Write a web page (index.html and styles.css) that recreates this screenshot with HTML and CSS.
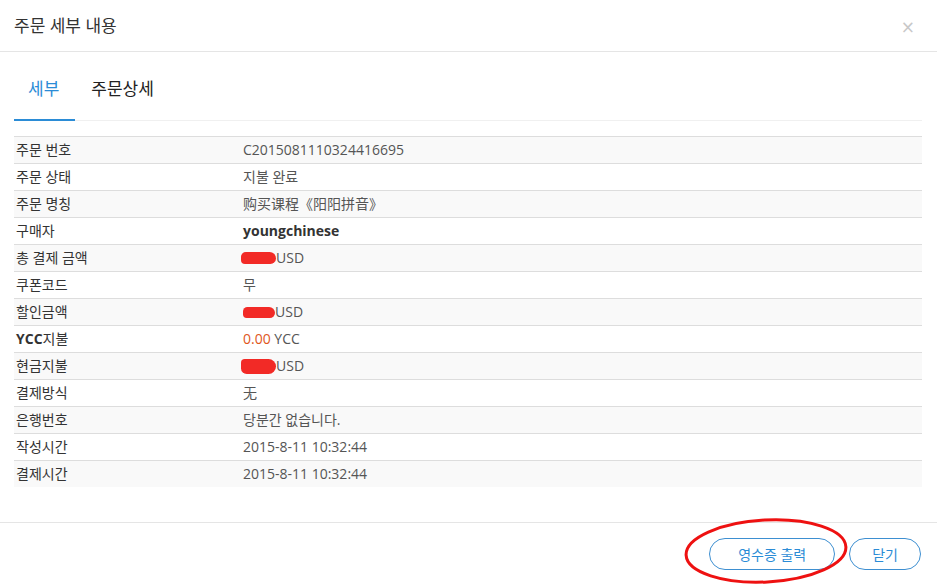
FILE: index.html
```html
<!DOCTYPE html>
<html lang="ko">
<head>
  <meta charset="UTF-8" />
  <title>주문 세부 내용</title>
  <link rel="stylesheet" href="styles.css">
</head>
<body>
  <div class="modal">
    <div class="modal-header">
      <h4 class="modal-title">주문 세부 내용</h4>
      <button class="close">×</button>
    </div>

    <div class="modal-body">
      <ul class="tabs">
        <li class="active">세부</li>
        <li>주문상세</li>
      </ul>

      <table class="detail">
        <tr><td>주문 번호</td><td>C2015081110324416695</td></tr>
        <tr><td>주문 상태</td><td>지불 완료</td></tr>
        <tr><td>주문 명칭</td><td>购买课程《阳阳拼音》</td></tr>
        <tr><td>구매자</td><td><b>youngchinese</b></td></tr>
        <tr><td>총 결제 금액</td><td><span class="blot"></span>USD</td></tr>
        <tr><td>쿠폰코드</td><td>무</td></tr>
        <tr><td>할인금액</td><td><span class="blot small"></span>USD</td></tr>
        <tr><td><b>YCC</b>지불</td><td><span class="ycc">0.00</span> YCC</td></tr>
        <tr><td>현금지불</td><td><span class="blot tall"></span>USD</td></tr>
        <tr><td>결제방식</td><td>无</td></tr>
        <tr><td>은행번호</td><td>당분간 없습니다.</td></tr>
        <tr><td>작성시간</td><td>2015-8-11 10:32:44</td></tr>
        <tr><td>결제시간</td><td>2015-8-11 10:32:44</td></tr>
      </table>
    </div>

    <div class="modal-footer">
      <button class="btn btn-print">영수증 출력</button>
      <button class="btn">닫기</button>
      <svg class="mark" width="175" height="76" viewBox="0 0 175 76">
        <ellipse cx="86" cy="38" rx="80" ry="31" transform="rotate(-3 86 38)" />
      </svg>
    </div>
  </div>
</body>
</html>
```

FILE: styles.css
```css
body {
  margin: 0;
  font-family: 'Open Sans', 'Noto Sans CJK KR', sans-serif;
  font-size: 14px;
  color: #333;
  background: #fff;
}

.modal {
  width: 937px;
  height: 586px;
  background: #fff;
  overflow: hidden;
}

.modal-header {
  display: flex;
  justify-content: space-between;
  align-items: flex-start;
  height: 21px;
  padding: 15px 22px 15px 14px;
  border-bottom: 1px solid #e5e5e5;
}

.modal-title {
  margin: 0;
  font-size: 17px;
  font-weight: normal;
  line-height: 21px;
  color: #333;
}

.close {
  border: none;
  background: none;
  padding: 0;
  margin-top: 4px;
  font-family: 'DejaVu Sans', sans-serif;
  font-size: 17px;
  line-height: 17px;
  color: #c8c8c8;
  cursor: pointer;
}

.modal-body {
  padding: 0 15px 35px 14px;
}

.tabs {
  display: flex;
  list-style: none;
  margin: 0 0 15px;
  padding: 6px 0 0;
  border-bottom: 1px solid #f0f0f0;
}

.tabs li {
  padding: 20px 16px 19px 14px;
  margin-right: 2px;
  margin-bottom: -1px;
  font-size: 17px;
  line-height: 22px;
  color: #222;
  border-bottom: 2px solid transparent;
}

.tabs li.active {
  color: #2b8cd6;
  border-bottom-color: #2b8cd6;
}

.detail {
  width: 100%;
  border-collapse: collapse;
}

.detail td {
  padding: 3px 2px;
  line-height: 20px;
  border-top: 1px solid #ddd;
  color: #555;
  white-space: nowrap;
}

.detail td:first-child {
  width: 25%;
  color: #333;
}

.detail tr:nth-child(odd) td {
  background: #f9f9f9;
}

.detail b {
  color: #333;
}

.ycc {
  color: #e0561c;
}

.blot {
  display: inline-block;
  width: 35px;
  height: 12px;
  margin-left: -2px;
  border-radius: 6px 8px 7px 5px;
  background: #f22a26;
  vertical-align: -1px;
}

.blot.small {
  width: 32px;
  height: 11px;
  margin-left: 0;
}

.blot.tall {
  height: 15px;
  border-radius: 4px 8px 8px 6px;
  vertical-align: -3px;
}

.modal-footer {
  position: relative;
  display: flex;
  justify-content: flex-end;
  gap: 14px;
  padding: 15px 16px;
  border-top: 1px solid #e5e5e5;
}

.btn {
  height: 32px;
  padding: 0 22px;
  border: 1px solid #3d8fd1;
  border-radius: 16px;
  background: #fff;
  color: #2b8cd6;
  font-family: 'Open Sans', 'Noto Sans CJK KR', sans-serif;
  font-size: 14px;
  cursor: pointer;
}

.btn-print {
  padding: 0 28px;
}

.mark {
  position: absolute;
  left: 680px;
  top: -10px;
  overflow: visible;
  pointer-events: none;
}

.mark ellipse {
  fill: none;
  stroke: #ee1111;
  stroke-width: 3;
}
```
